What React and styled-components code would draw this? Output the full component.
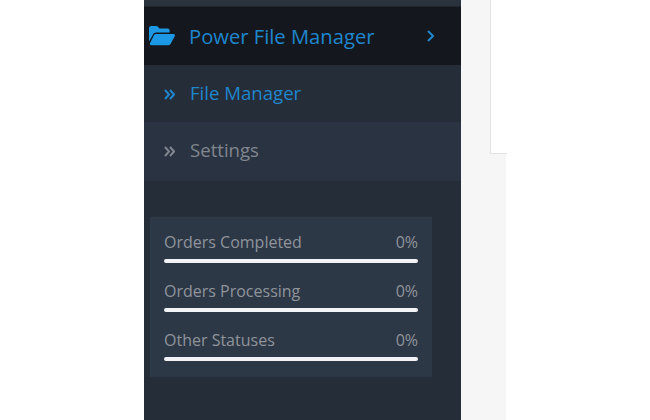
import React from 'react';
import styled, { createGlobalStyle } from 'styled-components';

const GlobalStyle = createGlobalStyle`
  html, body {
    margin: 0;
    padding: 0;
    background: #fff;
    overflow: hidden;
  }
  body {
    font-family: "Open Sans", "Liberation Sans", sans-serif;
  }
`;

const Page = styled.div`
  display: flex;
  width: 650px;
  height: 420px;
  padding-left: 144px;
  box-sizing: border-box;
  overflow: hidden;
`;

const Sidebar = styled.aside`
  width: 317px;
  background: #252d38;
  display: flex;
  flex-direction: column;
`;

const TopStrip = styled.div`
  height: 6px;
  background: #2a323e;
  border-bottom: 1px solid #20262f;
`;

const MainItem = styled.div`
  height: 58px;
  background: #14181e;
  display: flex;
  align-items: center;
  padding-left: 5px;
  color: #1f86cd;
  font-size: 20.2px;
`;

const MainLabel = styled.span`
  margin-left: 14px;
  width: 185px;
  white-space: nowrap;
`;

const Chevron = styled.svg`
  margin-left: 52px;
  width: 9px;
  height: 12px;
`;

const SubItem = styled.div`
  height: ${({ $h }) => $h}px;
  box-sizing: border-box;
  background: ${({ $bg }) => $bg};
  border-bottom: ${({ $line }) => ($line ? '1px solid #283140' : 'none')};
  display: flex;
  align-items: center;
  padding: 0 0 ${({ $lift }) => $lift}px 20px;
  font-size: 18.6px;
  color: ${({ $active }) => ($active ? '#1f86cd' : '#80868f')};
`;

const SubLabel = styled.span`
  margin-left: 15px;
  white-space: nowrap;
`;

const ArrowIcon = styled.svg`
  width: 11px;
  height: 11px;
  margin-top: 3px;
`;

const Stats = styled.div`
  margin: 36px 0 0 6px;
  width: 282px;
  height: 160px;
  box-sizing: border-box;
  padding: 15px 14px 0;
  background: #2d3846;
  display: flex;
  flex-direction: column;
  gap: 18px;
`;

const Stat = styled.div`
  display: flex;
  flex-direction: column;
  gap: 6px;
`;

const StatHead = styled.div`
  display: flex;
  justify-content: space-between;
  height: 21px;
  line-height: 21px;
  font-size: 16px;
  color: #8f949b;
`;

const Bar = styled.div`
  height: 4px;
  border-radius: 2px;
  background: #f1f3f5;
`;

const Content = styled.main`
  width: 45px;
  background: #f6f6f7;
  padding-left: 29px;
  box-sizing: border-box;
`;

const Card = styled.div`
  height: 154px;
  margin-right: -1px;
  background: #fff;
  border-left: 1px solid #e2e2e2;
  border-bottom: 1px solid #e2e2e2;
  box-sizing: border-box;
`;

const FolderOpen = () => (
  <svg width="26" height="20" viewBox="0 0 26 20" fill="#1d98e4">
    <path d="M0 2.2C0 1 .9 0 2.1 0h5.2c.8 0 1.4.4 1.9 1l1.2 1.6h8.1c1.2 0 2.1.9 2.1 2.1V6.6H7.2c-1.4 0-2.5.7-3.2 1.9L0 15.6z" />
    <path d="M7.3 8h17.3c1 0 1.7 1.1 1.2 2l-4 7.6c-.5 1-1.4 1.6-2.5 1.6H2.2c-1 0-1.7-1.1-1.2-2l3.9-7.9C5.4 8.5 6.3 8 7.3 8z" />
  </svg>
);

const DoubleArrow = ({ color }) => (
  <ArrowIcon viewBox="0 0 11 11" fill="none" stroke={color} strokeWidth="2">
    <path d="M1 1l4 4.5L1 10" />
    <path d="M6 1l4 4.5L6 10" />
  </ArrowIcon>
);

const stats = ['Orders Completed', 'Orders Processing', 'Other Statuses'];

export default function App() {
  return (
    <>
      <GlobalStyle />
      <Page>
        <Sidebar>
          <TopStrip />
          <MainItem>
            <FolderOpen />
            <MainLabel>Power File Manager</MainLabel>
            <Chevron viewBox="0 0 9 12" fill="none" stroke="#1f86cd" strokeWidth="2">
              <path d="M2 1l5 5-5 5" />
            </Chevron>
          </MainItem>
          <SubItem $h={57} $bg="#252d39" $lift={2} $active>
            <DoubleArrow color="#1f86cd" />
            <SubLabel>File Manager</SubLabel>
          </SubItem>
          <SubItem $h={59} $bg="#2a3341" $lift={3} $line>
            <DoubleArrow color="#80868f" />
            <SubLabel>Settings</SubLabel>
          </SubItem>
          <Stats>
            {stats.map((name) => (
              <Stat key={name}>
                <StatHead>
                  <span>{name}</span>
                  <span>0%</span>
                </StatHead>
                <Bar />
              </Stat>
            ))}
          </Stats>
        </Sidebar>
        <Content>
          <Card />
        </Content>
      </Page>
    </>
  );
}
